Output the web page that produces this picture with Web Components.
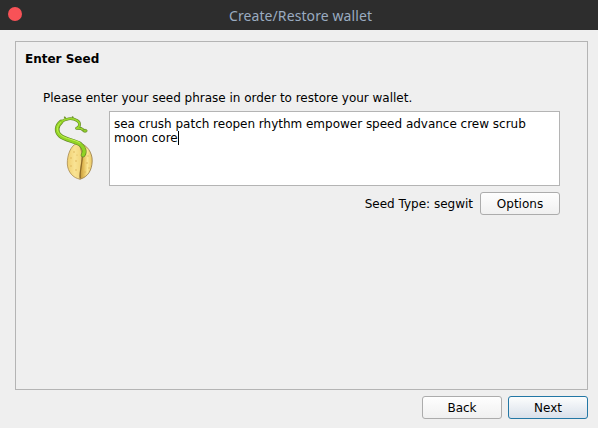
<!DOCTYPE html>
<html lang="en">
<head>
<meta charset="utf-8">
<title>Create/Restore wallet</title>
<style>
html,body{margin:0;height:100%;overflow:hidden}
body{background:#efefef;font:12px/14px "DejaVu Sans",sans-serif;color:#000}
</style>
</head>
<body>
<wallet-window></wallet-window>
<script>
class TitleBar extends HTMLElement{
  constructor(){super();this.attachShadow({mode:'open'}).innerHTML=`
<style>
:host{display:grid;grid-template-columns:14px 1fr 14px;align-items:center;height:30px;box-sizing:border-box;padding:0 8px;background:#2d2d2d;color:#9aabc0;font:14px/19px "Noto Sans",sans-serif;letter-spacing:.09px}
i{width:14px;height:14px;border-radius:50%;background:#f85257;margin-top:-2px}
span{text-align:center;padding-left:3px;white-space:nowrap}
</style><i></i><span><slot></slot></span>`}
}
class PushButton extends HTMLElement{
  constructor(){super();this.attachShadow({mode:'open'}).innerHTML=`
<style>
:host{display:flex;align-items:center;justify-content:center;box-sizing:border-box;width:80px;height:23px;border:1px solid #acacac;border-radius:3px;background:linear-gradient(#fefefe,#f0f0f0)}
:host([primary]){border-color:#2377a5;background:linear-gradient(#fcfdfd,#d9e0ea)}
</style><slot></slot>`}
}
class SeedIcon extends HTMLElement{
  constructor(){super();this.attachShadow({mode:'open'}).innerHTML=`
<style>:host{display:block;width:50px;height:75px}svg{display:block}</style>
<svg width="50" height="75" viewBox="0 1 50 75">
<defs>
<linearGradient id="l" x1="0" x2="1"><stop offset="0" stop-color="#efcf70"/><stop offset=".5" stop-color="#f9e394"/><stop offset="1" stop-color="#f1d376"/></linearGradient>
<linearGradient id="r" x1="0" x2="1"><stop offset="0" stop-color="#b98d34"/><stop offset=".35" stop-color="#e3bd58"/><stop offset=".65" stop-color="#fbe795"/><stop offset="1" stop-color="#e8c560"/></linearGradient>
</defs>
<path d="M29 33.5C37 34 42.5 43 42.2 51C42 60 38 67 30 69.2Z" fill="url(#r)" stroke="#a08450" stroke-width=".9"/>
<path d="M27 33.5C21 35 17 45 17.3 54C17.8 62 23 68 30 69.2C29 64 32 54 32.2 44L29 33.5Z" fill="url(#l)" stroke="#a98b50" stroke-width=".8"/>
<path d="M32.4 45C32.4 55 29.4 61 30.3 68" fill="none" stroke="#8f6b25" stroke-width="1.1"/>
<g fill="#dcb45b"><circle cx="24" cy="42" r=".8"/><circle cx="21" cy="48" r=".8"/><circle cx="26" cy="51" r=".8"/><circle cx="21" cy="56" r=".8"/><circle cx="26" cy="60" r=".8"/><circle cx="27" cy="45" r=".6"/><circle cx="38" cy="46" r=".7"/><circle cx="37" cy="53" r=".8"/><circle cx="39" cy="58" r=".7"/><circle cx="35" cy="62" r=".7"/></g>
<g fill="none" stroke-linecap="round" stroke-linejoin="round">
<path d="M34 20.5L31 18.5L26.5 18.3C30.5 17 30.5 12.5 27 10.5C22 7.5 15 8.5 11 12" stroke="#64852a" stroke-width="2.8"/>
<path d="M16 9L14.7 7.3M23 8.8L22.6 7" stroke="#6f962b" stroke-width="1.7"/>
<path d="M11 12C6 16 6 22 10 25.5C15 30 24 30.5 30 34C34 37 35.5 42 33 45" stroke="#64852a" stroke-width="4.6"/>
<path d="M34 20.5L31 18.5L26.5 18.3C30.5 17 30.5 12.5 27 10.5C22 7.5 15 8.5 11 12" stroke="#99d82c" stroke-width="1.7"/>
<path d="M11 12C6 16 6 22 10 25.5C15 30 24 30.5 30 34C34 37 35.5 42 33 45" stroke="#91d324" stroke-width="3.3"/>
<path d="M10.5 12.5C6 17 6.5 21.5 10.5 25C15 29 25 29.5 30 33" stroke="#c0f050" stroke-width="1"/>
</g>
<ellipse cx="35" cy="20.8" rx="2.2" ry="1.5" fill="#8fcf2a" stroke="#67892c" stroke-width=".7"/>
</svg>`}
}
class SeedInput extends HTMLElement{
  constructor(){super();this.attachShadow({mode:'open'}).innerHTML=`
<style>
:host{display:block;box-sizing:border-box;width:451px;height:75px;padding:5px 4px;background:#fff;border:1px solid #b4b4b4;letter-spacing:-.012px}
i{display:inline-block;width:1px;height:14px;background:#000;vertical-align:top}
</style><slot></slot><i></i>`}
}
class GroupFrame extends HTMLElement{
  constructor(){super();this.attachShadow({mode:'open'}).innerHTML=`
<style>
:host{display:block;box-sizing:border-box;height:349px;border:1px solid #b4b4b4;padding:10px 27px 0 9px}
h1{font-size:12px;line-height:14px;font-weight:bold;margin:0 0 25px}
</style><h1><slot name="heading"></slot></h1><slot></slot>`}
}
class WalletWindow extends HTMLElement{
  constructor(){super();this.attachShadow({mode:'open'}).innerHTML=`
<style>
:host{display:block;height:100vh;background:#efefef}
main{padding:11px 10px 0 15px}
p{margin:0 0 6px 18px;letter-spacing:-.012px}
.entry{display:flex;justify-content:flex-end;gap:9px}
.type{display:flex;justify-content:flex-end;align-items:center;gap:7px;margin-top:6px}
footer{display:flex;justify-content:flex-end;gap:6px;margin-top:6px}
</style>
<title-bar>Create/Restore wallet</title-bar>
<main>
<group-frame><span slot="heading">Enter Seed</span>
<p>Please enter your seed phrase in order to restore your wallet.</p>
<div class="entry"><seed-icon></seed-icon><seed-input>sea crush patch reopen rhythm empower speed advance crew scrub moon core</seed-input></div>
<div class="type"><span>Seed Type: segwit</span><push-button>Options</push-button></div>
</group-frame>
<footer><push-button>Back</push-button><push-button primary>Next</push-button></footer>
</main>`}
}
customElements.define('title-bar',TitleBar);
customElements.define('push-button',PushButton);
customElements.define('seed-icon',SeedIcon);
customElements.define('seed-input',SeedInput);
customElements.define('group-frame',GroupFrame);
customElements.define('wallet-window',WalletWindow);
</script>
</body>
</html>
